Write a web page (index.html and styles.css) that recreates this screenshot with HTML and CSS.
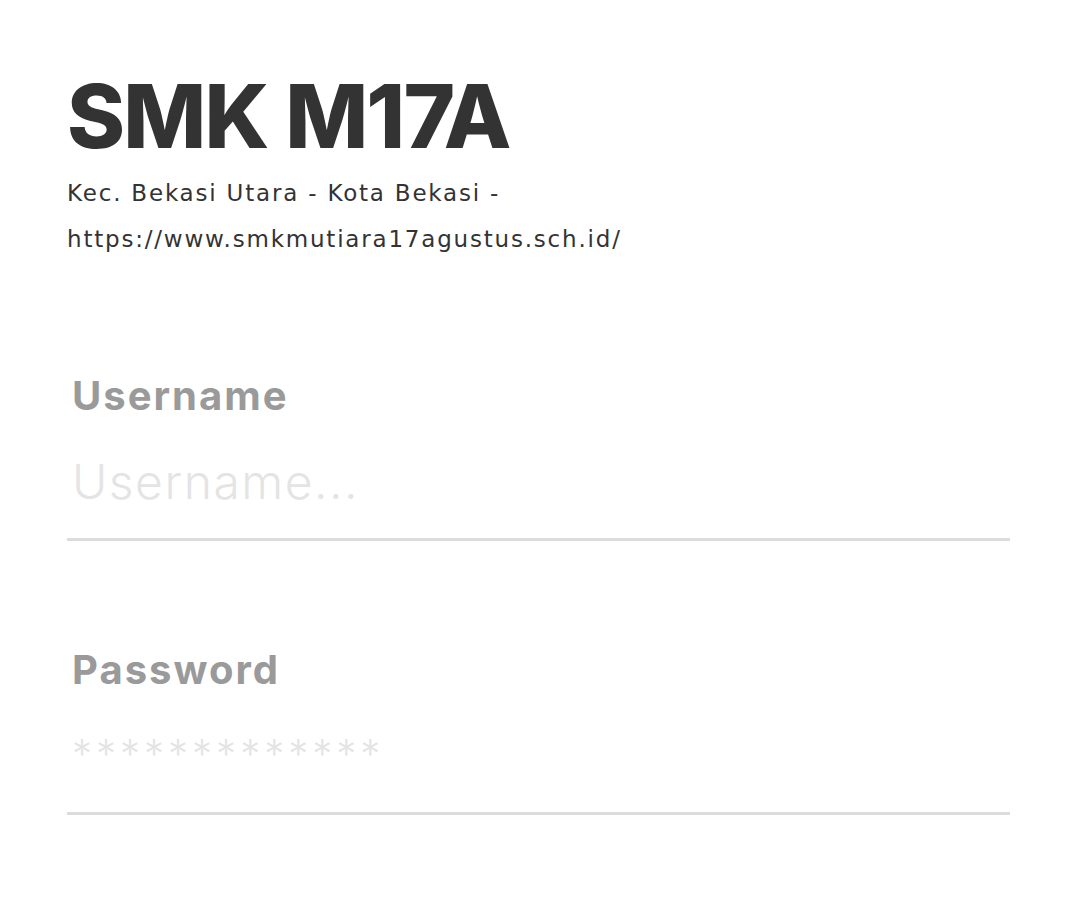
FILE: index.html
```html
<!DOCTYPE html>
<html lang="id">
<head>
<meta charset="utf-8">
<title>SMK M17A - Login</title>
<link rel="stylesheet" href="styles.css">
</head>
<body>
<main class="page">
  <header class="brand">
    <h1 class="title">SMK M17A</h1>
    <p class="address">Kec. Bekasi Utara - Kota Bekasi -<br>https://www.smkmutiara17agustus.sch.id/</p>
  </header>
  <form class="form">
    <label class="field">
      <span class="label">Username</span>
      <input class="input" type="text" placeholder="Username...">
    </label>
    <label class="field">
      <span class="label">Password</span>
      <input class="input input-pass" type="password" placeholder="*************">
    </label>
  </form>
</main>
</body>
</html>
```
FILE: styles.css
```css
html, body {
  margin: 0;
  padding: 0;
  background: #ffffff;
}
.page {
  padding: 66px 0 0 67px;
  width: 943px;
  font-family: Inter, "Noto Sans", sans-serif;
}
.brand {
  display: flex;
  flex-direction: column;
}
.title {
  margin: 0;
  font-family: Inter, sans-serif;
  font-weight: 800;
  font-size: 88px;
  line-height: 100px;
  letter-spacing: -1.8px;
  color: #333333;
}
.address {
  margin: 4px 0 0;
  font-family: "DejaVu Sans", sans-serif;
  font-size: 23px;
  line-height: 46px;
  letter-spacing: 1.8px;
  color: #333333;
}
.form {
  margin-top: 109px;
  display: flex;
  flex-direction: column;
  gap: 104px;
}
.field {
  display: flex;
  flex-direction: column;
}
.label {
  padding-left: 5px;
  font-family: Inter, sans-serif;
  font-weight: 700;
  font-size: 40px;
  line-height: 50px;
  letter-spacing: 2px;
  color: #9a9a9a;
}
.input {
  margin-top: 31px;
  padding: 0 5px 26px;
  border: 0;
  border-bottom: 3px solid #dcdcdc;
  background: transparent;
  outline: none;
  font-family: Inter, sans-serif;
  font-weight: 300;
  font-size: 48px;
  line-height: 60px;
  letter-spacing: 1.5px;
  color: #333333;
}
.input::placeholder {
  color: #e4e4e4;
  opacity: 1;
}
.input-pass {
  font-size: 40px;
  line-height: 56px;
  padding-bottom: 30px;
  letter-spacing: 4px;
}
```
